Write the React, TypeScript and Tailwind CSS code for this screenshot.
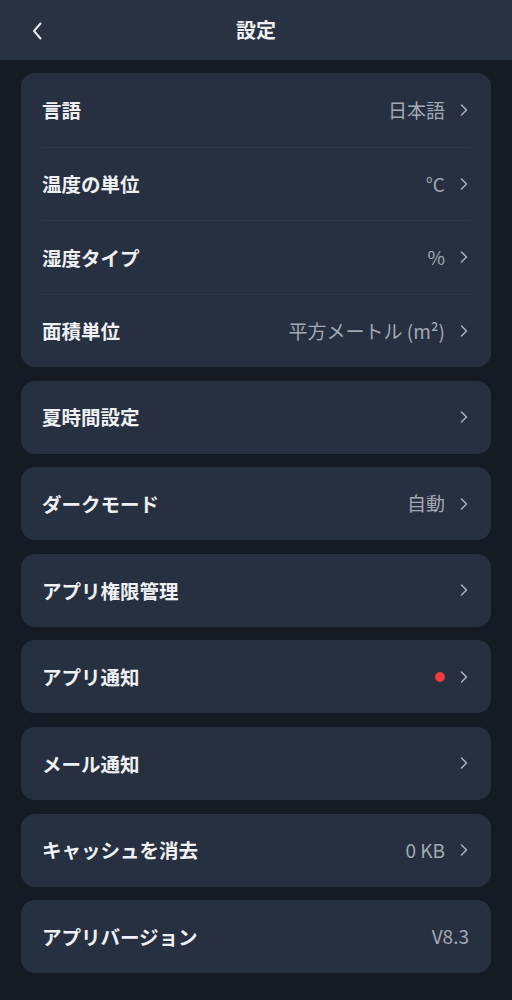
import React from 'react';

type Row = { label: string; value?: string; dot?: boolean; chevron?: boolean };

const groupRows: Row[] = [
  { label: '言語', value: '日本語', chevron: true },
  { label: '温度の単位', value: '°C', chevron: true },
  { label: '湿度タイプ', value: '%', chevron: true },
  { label: '面積単位', value: '平方メートル (m²)', chevron: true },
];

const singles: Row[] = [
  { label: '夏時間設定', chevron: true },
  { label: 'ダークモード', value: '自動', chevron: true },
  { label: 'アプリ権限管理', chevron: true },
  { label: 'アプリ通知', dot: true, chevron: true },
  { label: 'メール通知', chevron: true },
  { label: 'キャッシュを消去', value: '0 KB', chevron: true },
  { label: 'アプリバージョン', value: 'V8.3' },
];

const Chevron = () => (
  <svg width="10" height="16" viewBox="0 0 10 16" fill="none" className="ml-[14px] text-[#aab1bb]">
    <path d="M2.5 3l5 5-5 5" stroke="currentColor" strokeWidth="1.5" strokeLinecap="round" strokeLinejoin="round" />
  </svg>
);

const RowItem = ({ row }: { row: Row }) => (
  <div className="flex items-center h-full pl-[21px] pr-[22px]">
    <span className="flex-1 text-[19.5px] font-bold text-[#eef0f3]">{row.label}</span>
    {row.value && <span className="text-[19px] text-[#a2a9b3]">{row.value}</span>}
    {row.dot && <span className="w-[10px] h-[10px] rounded-full bg-[#f03a3a]" />}
    {row.chevron && <Chevron />}
  </div>
);

export default function App() {
  return (
    <div
      className="min-h-[1000px] bg-[#141b25]"
      style={{ fontFamily: '"Noto Sans CJK JP", "Noto Sans", sans-serif' }}
    >
      {/* Header */}
      <div className="relative h-[60px] bg-[#283242] flex items-center justify-center">
        <button className="absolute left-[30px] top-[21px] text-[#e8ebef]">
          <svg width="14" height="20" viewBox="0 0 14 20" fill="none">
            <path d="M10.5 2.5L4 10l6.5 7.5" stroke="currentColor" strokeWidth="2" strokeLinecap="round" strokeLinejoin="round" />
          </svg>
        </button>
        <h1 className="text-[20px] font-bold text-[#eef0f3]">設定</h1>
      </div>

      <div className="px-[21px] pt-[13px] flex flex-col gap-[13.6px]">
        <div className="bg-[#263040] rounded-[14px] overflow-hidden">
          {groupRows.map((r, i) => (
            <div key={r.label} className="h-[73.5px] flex flex-col">
              {i > 0 && <div className="mx-[21px] h-px bg-[#2d3848] shrink-0" />}
              <div className="flex-1">
                <RowItem row={r} />
              </div>
            </div>
          ))}
        </div>
        {singles.map((r) => (
          <div key={r.label} className="bg-[#263040] rounded-[14px] h-[73px]">
            <RowItem row={r} />
          </div>
        ))}
      </div>
    </div>
  );
}
